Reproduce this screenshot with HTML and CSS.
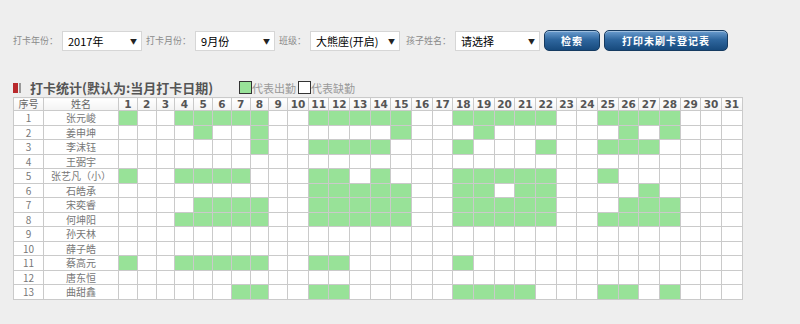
FILE: index.html
```html
<!DOCTYPE html>
<html lang="zh-CN">
<head>
    <meta charset="UTF-8">
    <meta name="viewport" content="width=device-width, initial-scale=1.0">
    <title>打卡统计</title>
    <link rel="stylesheet" href="styles.css">
</head>
<body>

    <div class="page">
        <form class="filter-bar" onsubmit="return false;">
            <span class="filter-label">打卡年份：</span>
            <span class="select-wrap year">
                <select><option>2017年</option><option>2016年</option></select>
            </span>
            <span class="filter-label">打卡月份：</span>
            <span class="select-wrap month">
                <select><option>9月份</option><option>8月份</option></select>
            </span>
            <span class="filter-label">班级：</span>
            <span class="select-wrap class-name">
                <select><option>大熊座(开启)</option></select>
            </span>
            <span class="filter-label">孩子姓名：</span>
            <span class="select-wrap child">
                <select><option>请选择</option></select>
            </span>
            <button class="btn btn-search">检索</button>
            <button class="btn btn-print">打印未刷卡登记表</button>
        </form>

        <div class="stat-head">
            <i class="mark-red"></i><i class="mark-gray"></i>
            <h3 class="stat-title">打卡统计(默认为:当月打卡日期)</h3>
            <span class="legend"><i class="legend-box on"></i>代表出勤</span>
            <span class="legend"><i class="legend-box"></i>代表缺勤</span>
        </div>

        <table class="attend" id="attend">
            <colgroup id="cols"></colgroup>
            <thead><tr id="headRow"><th class="cn">序号</th><th class="cn">姓名</th></tr></thead>
            <tbody id="body"></tbody>
        </table>
    </div>

    <script>
        // days with a card swipe, per child
        const kids = [
            ['张元峻', [1, 4, 5, 6, 7, 8, 11, 12, 13, 14, 15, 18, 19, 20, 21, 22, 25, 26, 27, 28]],
            ['姜申坤', [5, 8, 15, 19, 26, 28]],
            ['李沫钰', [8, 11, 12, 13, 14, 18, 22, 25, 26, 27]],
            ['王弼宇', []],
            ['张艺凡（小）', [1, 4, 5, 6, 7, 11, 12, 14, 18, 19, 20, 21, 22, 25]],
            ['石皓承', [11, 12, 13, 14, 15, 18, 19, 21, 22, 27]],
            ['宋奕睿', [5, 6, 7, 8, 11, 12, 13, 14, 15, 18, 19, 20, 21, 22, 26, 27, 28]],
            ['何坤阳', [4, 5, 6, 7, 8, 11, 12, 13, 14, 15, 18, 19, 20, 21, 22, 25, 26, 27, 28]],
            ['孙天林', []],
            ['薛子皓', []],
            ['蔡高元', [1, 4, 5, 6, 7, 8, 11, 12, 18]],
            ['唐东恒', []],
            ['曲甜鑫', [7, 8, 11, 12, 18, 19, 20, 21, 25, 26, 28]]
        ];

        const cols = document.getElementById('cols');
        const headRow = document.getElementById('headRow');
        const body = document.getElementById('body');

        let colHtml = '<col class="c-no"><col class="c-name">';
        let headHtml = '';
        for (let d = 1; d <= 31; d++) {
            colHtml += d < 10 ? '<col class="c-day1">' : '<col class="c-day2">';
            headHtml += '<th>' + d + '</th>';
        }
        cols.innerHTML = colHtml;
        headRow.insertAdjacentHTML('beforeend', headHtml);

        let rows = '';
        kids.forEach(function (kid, i) {
            rows += '<tr><td>' + (i + 1) + '</td><td>' + kid[0] + '</td>';
            for (let d = 1; d <= 31; d++) {
                rows += kid[1].indexOf(d) > -1 ? '<td class="on"></td>' : '<td></td>';
            }
            rows += '</tr>';
        });
        body.innerHTML = rows;
    </script>

</body>
</html>
```

FILE: styles.css
```css
body {
    margin: 0;
    background-color: #eeeeee;
    font-family: "Noto Sans CJK SC", "Liberation Sans", sans-serif;
    color: #666;
}
.page {
    padding: 30px 0 0 13px;
}

/* filter row */
.filter-bar {
    display: flex;
    align-items: center;
    height: 21px;
    margin: 0;
}
.filter-label {
    font-size: 9px;
    color: #8a8a8a;
    margin-right: 4px;
    white-space: nowrap;
}
.select-wrap {
    position: relative;
    margin-right: 4px;
}
.select-wrap select {
    -webkit-appearance: none;
    appearance: none;
    display: block;
    width: 100%;
    height: 20px;
    padding: 0 0 0 5px;
    border: 1px solid #d6d6d6;
    border-radius: 0;
    background-color: #fff;
    font-family: "Noto Sans CJK SC", "Liberation Sans", sans-serif;
    font-size: 11px;
    color: #000;
}
.select-wrap::after {
    content: "▼";
    position: absolute;
    right: 5px;
    top: 6px;
    font-size: 7px;
    line-height: 8px;
    color: #222;
    pointer-events: none;
}
.select-wrap.year, .select-wrap.month { width: 80px; }
.select-wrap.class-name { width: 90px; margin-right: 6px; }
.select-wrap.child { width: 85px; }

.btn {
    height: 21px;
    margin-right: 4px;
    padding: 0;
    border: 1px solid #163b61;
    border-radius: 5px;
    background: linear-gradient(#6b9dcf, #2f679f 45%, #174a7d);
    box-shadow: inset 0 1px 0 rgba(255, 255, 255, 0.35);
    color: #fff;
    font-family: "Noto Sans CJK SC", sans-serif;
    font-size: 10px;
    font-weight: bold;
    letter-spacing: 1px;
    cursor: pointer;
}
.btn-search { width: 56px; }
.btn-print { width: 124px; }

/* title + legend */
.stat-head {
    display: flex;
    align-items: center;
    height: 19px;
    margin-top: 27px;
}
.mark-red {
    width: 5px;
    height: 10px;
    background-color: #b8282c;
    margin-right: 1px;
}
.mark-gray {
    width: 2px;
    height: 10px;
    background-color: #999;
    margin-right: 9px;
}
.stat-title {
    margin: 0;
    font-size: 13px;
    font-weight: bold;
    color: #555;
}
.legend {
    display: flex;
    align-items: center;
    font-size: 11px;
    color: #999;
    margin-left: 2px;
}
.stat-title + .legend {
    margin-left: 26px;
}
.legend-box {
    width: 11px;
    height: 11px;
    border: 1px solid #333;
    background-color: #fff;
}
.legend-box.on {
    background-color: #98e298;
}

/* attendance table */
.attend {
    border-collapse: collapse;
    table-layout: fixed;
    width: 729px;
    background-color: #fff;
}
.c-no { width: 30px; }
.c-name { width: 75px; }
.c-day1 { width: 18.8px; }
.c-day2 { width: 20.67px; }
.attend th, .attend td {
    border: 1px solid #cacaca;
    padding: 0;
    text-align: center;
    white-space: nowrap;
    overflow: hidden;
}
.attend th {
    height: 12.4px;
    line-height: 12px;
    background: linear-gradient(#fff, #f3f3f3);
    font-family: "DejaVu Sans", sans-serif;
    font-size: 10.5px;
    font-weight: bold;
    color: #555;
}
.attend th.cn {
    font-family: "Noto Sans CJK SC", sans-serif;
    font-size: 10px;
    font-weight: normal;
    color: #666;
}
.attend td {
    height: 13.5px;
    line-height: 12px;
    font-size: 10px;
    color: #777;
}
.attend td.on {
    background-color: #98e298;
}
```
